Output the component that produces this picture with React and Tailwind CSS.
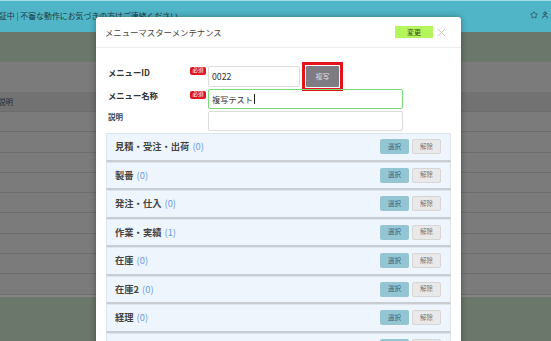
import React from "react";
import { Star, User } from "lucide-react";

const groups = [
  { name: "見積・受注・出荷", count: 0 },
  { name: "製番", count: 0 },
  { name: "発注・仕入", count: 0 },
  { name: "作業・実績", count: 1 },
  { name: "在庫", count: 0 },
  { name: "在庫2", count: 0 },
  { name: "経理", count: 0 },
  { name: "マスタ", count: 0 },
];

function Required() {
  return (
    <span className="mt-[1px] flex h-[8px] w-[16px] items-center justify-center rounded-[2px] bg-[#e0141c] text-[5.5px] leading-none text-white">
      必須
    </span>
  );
}

function GroupRow({ name, count }) {
  return (
    <div className="flex h-[28.5px] items-center justify-between border border-b-2 border-[#dfe5ec] border-b-[#c9cdd2] bg-[#eef5fd] pl-[8px] pr-[9px]">
      <div className="text-[9.3px] leading-none">
        <span className="font-bold text-[#444]">{name}</span>
        <span className="ml-[3px] text-[#6c9be6]">({count})</span>
      </div>
      <div className="flex gap-[3px]">
        <button className="flex h-[15px] w-[29px] items-center justify-center rounded-[2px] bg-[#93c5d3] text-[6.5px] text-[#3d6270]">
          選択
        </button>
        <button className="flex h-[15px] w-[29px] items-center justify-center rounded-[2px] border border-[#d6d6d6] bg-[#e9e9e9] text-[6.5px] text-[#777]">
          解除
        </button>
      </div>
    </div>
  );
}

export default function App() {
  return (
    <div className="relative h-[341px] w-[551px] overflow-hidden bg-[#6b776a] font-['Noto_Sans_CJK_JP',sans-serif]">
      {/* page behind the dialog */}
      <div className="flex h-[32px] items-center justify-between border-t border-[#a5dce6] bg-[#4fb5c7] pr-[2px]">
        <div className="-ml-[9px] whitespace-nowrap pb-[2px] text-[7.9px] text-[#1f3b44]">
          検証中 | 不審な動作にお気づきの方はご連絡ください
        </div>
        <div className="flex items-center gap-[3px] pb-[4px] text-[#1d2b30]">
          <Star size={8} strokeWidth={1.6} />
          <User size={8} strokeWidth={2} />
        </div>
      </div>
      <div className="h-[30px]" />
      <div className="bg-[#7b7b7b]">
        <div className="h-[30px]" />
        <div className="flex h-[20px] items-center border-b border-[#6c6c6c] bg-[#727272] text-[7.5px] text-[#2a2a2a]">
          <span className="-ml-[2px]">説明</span>
        </div>
        {Array.from({ length: 9 }).map((_, i) => (
          <div key={i} className="h-[20.3px] border-b border-[#6e6e6e]" />
        ))}
        <div className="h-[2px] bg-[#848484]" />
      </div>

      {/* dialog */}
      <div className="absolute left-[96px] top-[17px] w-[365px] rounded-[3px] bg-white shadow-[0_0_6px_rgba(0,0,0,0.35)]">
        <div className="flex h-[31px] items-center justify-between border-b border-[#ececec] pl-[9px] pr-[15px]">
          <span className="text-[8.4px] text-[#444]">メニューマスターメンテナンス</span>
          <div className="flex items-center gap-[3px]">
            <span className="flex h-[12px] w-[38px] items-center justify-center bg-[#b4f55c] text-[7px] text-[#3a4a20]">
              変更
            </span>
            <svg width="9" height="9" viewBox="0 0 9 9" className="ml-[1px]">
              <path d="M1 1L8 8M8 1L1 8" stroke="#c6c6c6" strokeWidth="1" />
            </svg>
          </div>
        </div>

        <div className="px-[10px] pt-[18px]">
          <div className="flex flex-col gap-[2px] pl-[2px]">
            <div className="flex h-[21px] items-start">
              <span className="w-[82px] text-[8.3px] font-bold leading-[12px] text-[#333]">メニューID</span>
              <Required />
              <div className="ml-[2px] flex h-[21px] w-[92px] items-center rounded-[2px] border border-[#dcdcdc] px-[3px] text-[8.7px] text-[#333]">
                0022
              </div>
              <div className="-mt-[4px] ml-[2px] shrink-0 border-[3px] border-[#e3121c] bg-white p-[1px]">
                <button className="flex h-[21px] w-[33px] items-center justify-center rounded-[1px] bg-[#7f7b82] text-[7px] text-[#ddd]">
                  複写
                </button>
              </div>
            </div>
            <div className="flex items-start">
              <span className="w-[82px] text-[8.3px] font-bold leading-[12px] text-[#333]">メニュー名称</span>
              <div className="mt-[1px]">
                <Required />
              </div>
              <div className="ml-[2px] flex h-[20px] w-[195px] items-center rounded-[2px] border border-[#78dc78] px-[3px] text-[8.2px] text-[#333]">
                複写テスト
                <span className="ml-[1px] h-[10px] w-[1px] bg-[#222]" />
              </div>
            </div>
            <div className="flex items-start">
              <span className="w-[98px] text-[7.5px] font-bold leading-[12px] text-[#444]">説明</span>
              <div className="ml-[2px] h-[20px] w-[195px] rounded-[2px] border border-[#dcdcdc]" />
            </div>
          </div>

          <div className="mt-[2px] flex flex-col">
            {groups.map((g) => (
              <GroupRow key={g.name} name={g.name} count={g.count} />
            ))}
          </div>
        </div>
      </div>
    </div>
  );
}
